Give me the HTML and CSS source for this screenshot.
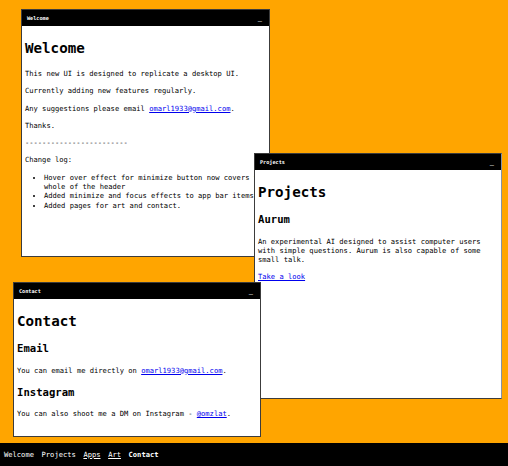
FILE: index.html
```html
<!DOCTYPE html>
<html lang="en">
<head>
<meta charset="utf-8">
<title>Desktop UI</title>
<link rel="stylesheet" href="styles.css">
</head>
<body>
<div class="screen">
  <main class="desktop">
    <section class="window win-welcome">
      <header class="titlebar"><span class="title">Welcome</span><span class="min">_</span></header>
      <div class="content">
        <h1>Welcome</h1>
        <p>This new UI is designed to replicate a desktop UI.</p>
        <p>Currently adding new features regularly.</p>
        <p>Any suggestions please email <a href="#">omarl1933@gmail.com</a>.</p>
        <p>Thanks.</p>
        <p>------------------------</p>
        <p>Change log:</p>
        <ul>
          <li>Hover over effect for minimize button now covers the whole of the header</li>
          <li>Added minimize and focus effects to app bar items</li>
          <li>Added pages for art and contact.</li>
        </ul>
      </div>
    </section>

    <section class="window win-projects">
      <header class="titlebar"><span class="title">Projects</span><span class="min">_</span></header>
      <div class="content">
        <h1>Projects</h1>
        <h2>Aurum</h2>
        <p>An experimental AI designed to assist computer users with simple questions. Aurum is also capable of some small talk.</p>
        <p><a href="#">Take a look</a></p>
      </div>
    </section>

    <section class="window win-contact">
      <header class="titlebar"><span class="title">Contact</span><span class="min">_</span></header>
      <div class="content">
        <h1>Contact</h1>
        <h2>Email</h2>
        <p>You can email me directly on <a href="#">omarl1933@gmail.com</a>.</p>
        <h2>Instagram</h2>
        <p>You can also shoot me a DM on Instagram - <a href="#">@omzlat</a>.</p>
      </div>
    </section>
  </main>

  <nav class="taskbar">
    <span class="task">Welcome</span>
    <span class="task">Projects</span>
    <a class="task task-link" href="#">Apps</a>
    <a class="task task-link" href="#">Art</a>
    <span class="task task-active">Contact</span>
  </nav>
</div>
</body>
</html>
```

FILE: styles.css
```css
html, body {
  margin: 0;
  padding: 0;
}

body {
  font-family: "DejaVu Sans Mono", "Liberation Mono", monospace;
  font-size: 7.12px;
  line-height: 9.3px;
  color: #000;
  background: #ffa500;
}

.screen {
  width: 508px;
  height: 466px;
  display: flex;
  flex-direction: column;
  overflow: hidden;
}

.desktop {
  position: relative;
  flex: 1;
  background: #ffa500;
}

.window {
  position: absolute;
  box-sizing: border-box;
  width: 248px;
  background: #fff;
  border: 1px solid #3c3c3c;
  display: flex;
  flex-direction: column;
  overflow: hidden;
}

.win-welcome {
  left: 21px;
  top: 9px;
  width: 249px;
  height: 248px;
  z-index: 1;
}

.win-projects {
  left: 254px;
  top: 153px;
  height: 246px;
  z-index: 2;
  border-right-color: #8493a8;
}

.win-contact {
  left: 13px;
  top: 282px;
  height: 155px;
  z-index: 3;
}

.titlebar {
  flex: none;
  height: 16px;
  background: #000;
  color: #fff;
  display: flex;
  align-items: center;
  justify-content: space-between;
  padding: 0 7px 0 5px;
}

.title {
  font-weight: bold;
  font-size: 5.2px;
  line-height: 8px;
}

.min {
  color: #a8a8a8;
  font-weight: bold;
  font-size: 7px;
  line-height: 8px;
  margin-top: -1px;
}

.content {
  padding: 0 0 0 3px;
}

h1 {
  font-size: 14.2px;
  line-height: 17px;
  font-weight: bold;
  margin: 14px 0 12px;
}

h2 {
  font-size: 10.6px;
  line-height: 13px;
  font-weight: bold;
  margin: 11px 0 10.5px;
}

p {
  margin: 8px 0;
}

ul {
  margin: 8px 0;
  padding-left: 19px;
}

a {
  color: #0000ee;
  text-decoration: underline;
}

.taskbar {
  flex: none;
  height: 23px;
  background: #000;
  display: flex;
  align-items: center;
  gap: 7.6px;
  padding-left: 4px;
}

.task {
  color: #fff;
  text-decoration: none;
}

.task-link {
  text-decoration: underline;
}

.task-active {
  font-weight: bold;
}
```
